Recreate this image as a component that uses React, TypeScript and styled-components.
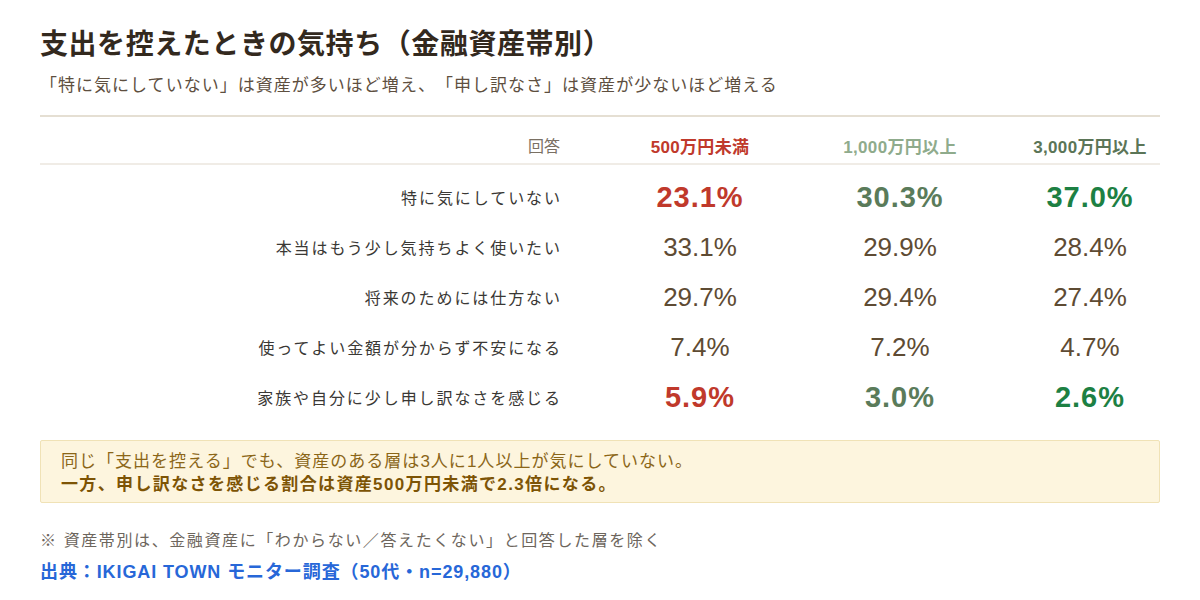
import React from "react";
import styled, { createGlobalStyle } from "styled-components";

const GlobalStyle = createGlobalStyle`
  html, body {
    margin: 0;
    padding: 0;
    background: #ffffff;
  }
  body {
    font-family: "Liberation Sans", "Noto Sans CJK JP", sans-serif;
    color: #3d3d3d;
    text-spacing-trim: space-all;
  }
`;

const Page = styled.div`
  width: 1120px;
  padding: 25px 40px 0;
`;

const Title = styled.h1`
  margin: 0;
  font-size: 28px;
  line-height: 40px;
  font-weight: 700;
  letter-spacing: 0.02em;
  color: #33291e;
`;

const Subtitle = styled.p`
  margin: 8px 0 0;
  font-size: 17px;
  line-height: 26px;
  letter-spacing: 0.06em;
  color: #5e4f3f;
`;

const Table = styled.div`
  margin-top: 16px;
  border-top: 2px solid #e5dfd3;
`;

const Row = styled.div<{ $head?: boolean }>`
  display: grid;
  grid-template-columns: 580px 160px 240px 140px;
  align-items: center;
  height: ${(p) => (p.$head ? "48px" : "50px")};
  padding-top: ${(p) => (p.$head ? "10px" : "0")};
  box-sizing: border-box;
  border-bottom: ${(p) => (p.$head ? "2px solid #f0ece6" : "none")};
`;

const Body = styled.div`
  padding-top: 7px;
`;

const HeadLabel = styled.div`
  padding-right: 60px;
  text-align: right;
  font-size: 16px;
  color: #7a7063;
`;

const HeadCell = styled.div<{ $color: string }>`
  text-align: center;
  font-size: 17px;
  font-weight: 700;
  letter-spacing: 0.02em;
  color: ${(p) => p.$color};
`;

const Label = styled.div`
  padding-right: 60px;
  text-align: right;
  font-size: 16px;
  letter-spacing: 0.12em;
  margin-right: -0.12em;
  color: #3a3835;
`;

const Value = styled.div<{ $color?: string; $strong?: boolean }>`
  text-align: center;
  font-size: ${(p) => (p.$strong ? "29px" : "26px")};
  font-weight: ${(p) => (p.$strong ? 700 : 400)};
  letter-spacing: ${(p) => (p.$strong ? "1px" : "0")};
  color: ${(p) => p.$color || "#5e4b33"};
`;

const Callout = styled.div`
  margin-top: 18px;
  padding: 9px 20px 6px;
  background: #fdf5de;
  border: 1px solid #f0e2b6;
  border-radius: 2px;
  font-size: 17px;
  line-height: 23px;
  letter-spacing: 0.06em;
  color: #8b6618;
`;

const CalloutStrong = styled.div`
  font-weight: 700;
  letter-spacing: 0.08em;
  color: #7d5405;
`;

const Note = styled.p`
  margin: 25px 0 0;
  font-size: 16px;
  line-height: 26px;
  letter-spacing: 0.1em;
  color: #6d665d;
`;

const Source = styled.p`
  margin: 5px 0 0;
  font-size: 18px;
  line-height: 26px;
  font-weight: 700;
  letter-spacing: 0.05em;
  color: #2767d8;
`;

const RED = "#c0392b";
const MID = "#5a7b5a";
const GREEN = "#1d8043";

type Item = { label: string; values: string[]; strong?: boolean };

const rows: Item[] = [
  { label: "特に気にしていない", values: ["23.1%", "30.3%", "37.0%"], strong: true },
  { label: "本当はもう少し気持ちよく使いたい", values: ["33.1%", "29.9%", "28.4%"] },
  { label: "将来のためには仕方ない", values: ["29.7%", "29.4%", "27.4%"] },
  { label: "使ってよい金額が分からず不安になる", values: ["7.4%", "7.2%", "4.7%"] },
  { label: "家族や自分に少し申し訳なさを感じる", values: ["5.9%", "3.0%", "2.6%"], strong: true },
];

const strongColors = [RED, MID, GREEN];

export default function App() {
  return (
    <>
      <GlobalStyle />
      <Page>
        <Title>支出を控えたときの気持ち（金融資産帯別）</Title>
        <Subtitle>
          「特に気にしていない」は資産が多いほど増え、「申し訳なさ」は資産が少ないほど増える
        </Subtitle>
        <Table>
          <Row $head>
            <HeadLabel>回答</HeadLabel>
            <HeadCell $color={RED}>500万円未満</HeadCell>
            <HeadCell $color="#8fab8c">1,000万円以上</HeadCell>
            <HeadCell $color="#5b7557">3,000万円以上</HeadCell>
          </Row>
          <Body>
            {rows.map((r) => (
              <Row key={r.label}>
                <Label>{r.label}</Label>
                {r.values.map((v, i) => (
                  <Value
                    key={i}
                    $strong={r.strong}
                    $color={r.strong ? strongColors[i] : undefined}
                  >
                    {v}
                  </Value>
                ))}
              </Row>
            ))}
          </Body>
        </Table>
        <Callout>
          <div>同じ「支出を控える」でも、資産のある層は3人に1人以上が気にしていない。</div>
          <CalloutStrong>一方、申し訳なさを感じる割合は資産500万円未満で2.3倍になる。</CalloutStrong>
        </Callout>
        <Note>※ 資産帯別は、金融資産に「わからない／答えたくない」と回答した層を除く</Note>
        <Source>出典：IKIGAI TOWN モニター調査（50代・n=29,880）</Source>
      </Page>
    </>
  );
}
